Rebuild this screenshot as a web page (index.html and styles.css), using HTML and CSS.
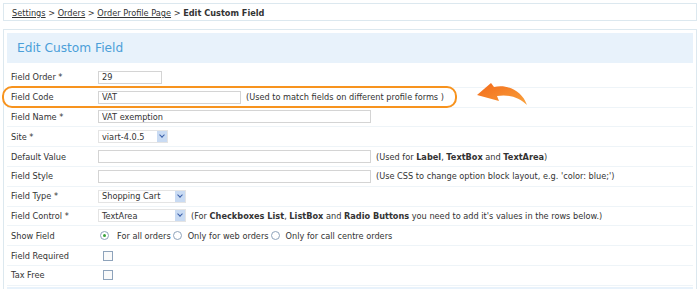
FILE: index.html
```html
<!DOCTYPE html>
<html lang="en">
  <head>
    <meta charset="UTF-8" />
    <title>Edit Custom Field</title>
    <link rel="stylesheet" href="styles.css">
  </head>
  <body>
    <div class="crumbs">
      <a href="#">Settings</a> &gt; <a href="#">Orders</a> &gt;
      <a href="#">Order Profile Page</a> &gt; <b>Edit Custom Field</b>
    </div>

    <div class="panel">
      <div class="panel-title">Edit Custom Field</div>

      <form class="form">
        <div class="row">
          <label>Field Order *</label>
          <div class="cell"><input class="in in-short" type="text" value="29"></div>
        </div>
        <div class="row">
          <label>Field Code</label>
          <div class="cell">
            <input class="in in-mid" type="text" value="VAT">
            <span class="note">(Used to match fields on different profile forms )</span>
          </div>
        </div>
        <div class="row">
          <label>Field Name *</label>
          <div class="cell"><input class="in in-long" type="text" value="VAT exemption"></div>
        </div>
        <div class="row">
          <label>Site *</label>
          <div class="cell">
            <div class="select sel-site"><span class="sel-text">viart-4.0.5</span><span class="sel-btn"></span></div>
          </div>
        </div>
        <div class="row">
          <label>Default Value</label>
          <div class="cell">
            <input class="in in-long" type="text">
            <span class="note">(Used for <b>Label</b>, <b>TextBox</b> and <b>TextArea</b>)</span>
          </div>
        </div>
        <div class="row">
          <label>Field Style</label>
          <div class="cell">
            <input class="in in-long" type="text">
            <span class="note">(Use CSS to change option block layout, e.g. 'color: blue;')</span>
          </div>
        </div>
        <div class="row">
          <label>Field Type *</label>
          <div class="cell">
            <div class="select sel-wide"><span class="sel-text">Shopping Cart</span><span class="sel-btn"></span></div>
          </div>
        </div>
        <div class="row">
          <label>Field Control *</label>
          <div class="cell">
            <div class="select sel-wide"><span class="sel-text">TextArea</span><span class="sel-btn"></span></div>
            <span class="note">(For <b>Checkboxes List</b>, <b>ListBox</b> and <b>Radio Buttons</b> you need to add it's values in the rows below.)</span>
          </div>
        </div>
        <div class="row">
          <label>Show Field</label>
          <div class="cell radios">
            <span class="radio on"></span>For all orders
            <span class="radio"></span>Only for web orders
            <span class="radio"></span>Only for call centre orders
          </div>
        </div>
        <div class="row">
          <label>Field Required</label>
          <div class="cell"><span class="check"></span></div>
        </div>
        <div class="row">
          <label>Tax Free</label>
          <div class="cell"><span class="check"></span></div>
        </div>
      </form>
      <div class="panel-foot"></div>

      <div class="highlight"></div>
      <svg class="arrow" width="56" height="26" viewBox="0 0 56 26">
        <defs>
          <linearGradient id="ag" x1="0" y1="0" x2="1" y2="1">
            <stop offset="0" stop-color="#f26a1b"/>
            <stop offset="1" stop-color="#f9a23c"/>
          </linearGradient>
        </defs>
        <path d="M1,13 L15,1 L18,5 C32,2 46,9 51,23 C43,15 32,12 21,14 L23,19 Z" fill="url(#ag)"/>
      </svg>
    </div>
  </body>
</html>
```

FILE: styles.css
```css
body {
  margin: 0;
  padding: 3px;
  font-family: "DejaVu Sans", Verdana, sans-serif;
  font-size: 8.2px;
  color: #333;
  background: #fff;
}
.crumbs {
  height: 18px;
  line-height: 17px;
  padding-top: 1px;
  border: 1px solid #dce8ef;
  box-sizing: border-box;
  padding-left: 8px;
  margin-bottom: 8px;
}
.crumbs a {
  color: #333;
}
.panel {
  position: relative;
  border: 1px solid #dce8ef;
  padding: 3px;
  height: 300px;
}
.panel-title {
  height: 30px;
  box-sizing: border-box;
  padding-top: 1px;
  line-height: 29px;
  background: #e8f2fb;
  color: #4b9fd9;
  font-size: 12.2px;
  padding-left: 10px;
}
.panel-foot {
  height: 8px;
  margin-top: 1px;
  background: #e8f2fb;
}
.form {
  margin: 0;
  padding-top: 5px;
}
.row {
  display: grid;
  grid-template-columns: 91px 1fr;
  align-items: center;
  height: 19.8px;
  box-sizing: border-box;
  border-bottom: 1px solid #eef4f8;
}
.row label {
  padding-left: 4px;
}
.cell {
  display: flex;
  align-items: center;
  gap: 5px;
}
.in {
  font: inherit;
  color: #333;
  height: 13px;
  box-sizing: border-box;
  border: 1px solid #d4d4d4;
  padding: 0 3px;
  margin: 0;
}
.in-short { width: 64px; }
.in-mid { width: 143px; }
.in-long { width: 273px; }
.select {
  display: flex;
  align-items: center;
  height: 13px;
  box-sizing: border-box;
  border: 1px solid #e4e4e4;
}
.sel-site { width: 70px; }
.sel-wide { width: 88px; }
.sel-text {
  flex: 1;
  padding-left: 3px;
}
.sel-btn {
  width: 10px;
  height: 11px;
  background: #c9dbf3;
  position: relative;
}
.sel-btn::after {
  content: "";
  position: absolute;
  left: 3px;
  top: 2px;
  width: 3px;
  height: 3px;
  border-right: 1.5px solid #3b5fa8;
  border-bottom: 1.5px solid #3b5fa8;
  transform: rotate(45deg);
}
.radios {
  gap: 0;
}
.radio {
  width: 9px;
  height: 9px;
  box-sizing: border-box;
  border: 1px solid #8ea3bb;
  border-radius: 50%;
  margin: 0 6px 0 2px;
  position: relative;
  background: #fff;
}
.radio:first-child {
  margin-right: 8px;
}
.radio.on::after {
  content: "";
  position: absolute;
  left: 2px;
  top: 2px;
  width: 3px;
  height: 3px;
  border-radius: 50%;
  background: #3aa33a;
}
.check {
  margin-left: 5px;
  width: 10px;
  height: 10px;
  box-sizing: border-box;
  border: 1px solid #8ea3bb;
  background: #fafafa;
}
.highlight {
  position: absolute;
  left: -2px;
  top: 56px;
  width: 455px;
  height: 22px;
  box-sizing: border-box;
  border: 2px solid #f7931e;
  border-radius: 10px;
}
.arrow {
  position: absolute;
  left: 472px;
  top: 52px;
}
```
